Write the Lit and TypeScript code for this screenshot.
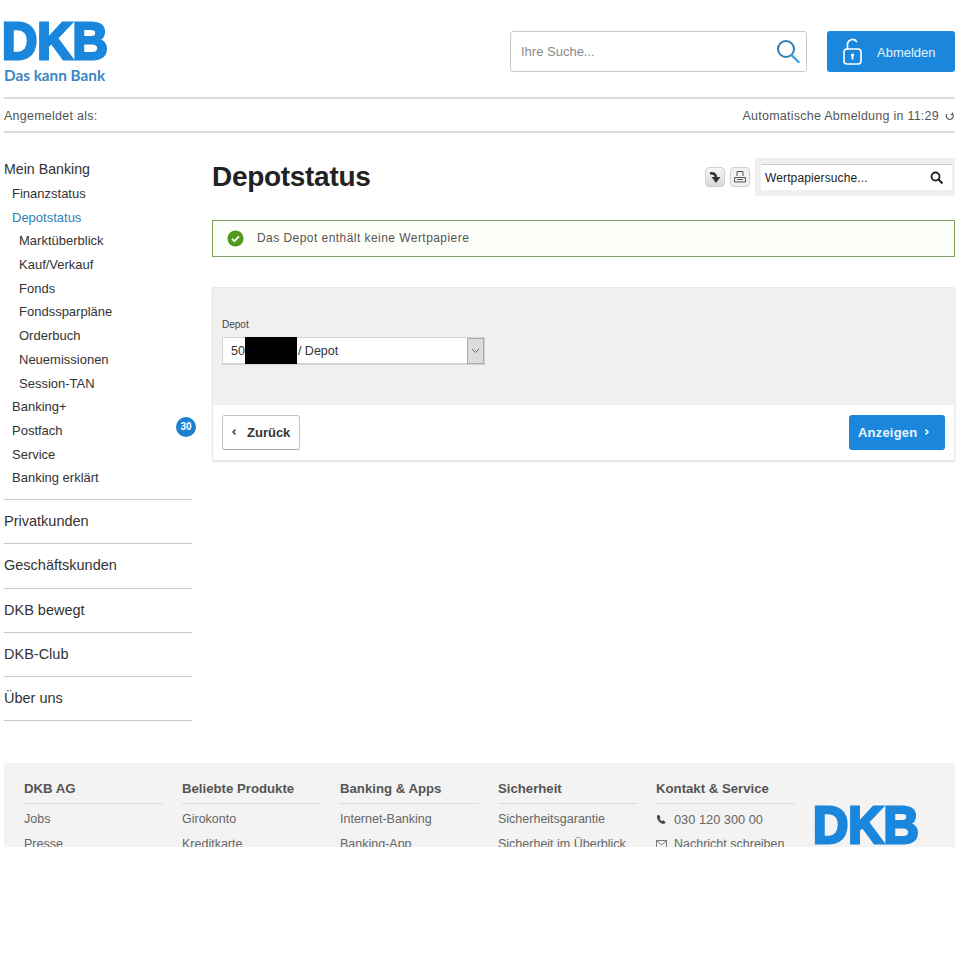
import { LitElement, html, css } from "lit";
import { customElement } from "lit/decorators.js";

const sub = ["Marktüberblick", "Kauf/Verkauf", "Fonds", "Fondssparpläne", "Orderbuch", "Neuemissionen", "Session-TAN"];
const after = ["Banking+", "Postfach", "Service", "Banking erklärt"];
const top = ["Privatkunden", "Geschäftskunden", "DKB bewegt", "DKB-Club", "Über uns"];
const foot = [
  ["DKB AG", "Jobs", "Presse"],
  ["Beliebte Produkte", "Girokonto", "Kreditkarte"],
  ["Banking & Apps", "Internet-Banking", "Banking-App"],
  ["Sicherheit", "Sicherheitsgarantie", "Sicherheit im Überblick"],
];

@customElement("app-root")
export class AppRoot extends LitElement {
  static styles = css`
    :host { display: block; height: 960px; background: #fff; font-family: "Liberation Sans", Arial, sans-serif; color: #333; overflow: hidden; }
    .page { padding: 0 5px 0 4px; }
    .header { height: 97px; display: flex; justify-content: space-between; box-sizing: border-box; padding-top: 21px; }
    .logo-box { width: 104px; }
    .dkb { display: block; width: 119px; height: 41px; margin-left: -2px; font-size: 52px; line-height: 41px; font-weight: 700; color: #1a87dd; -webkit-text-stroke: 3px #1a87dd; transform: scaleX(.94); transform-origin: 0 0; white-space: nowrap; }
    .tag { margin-top: 5px; font: 700 15.3px/17px Lato, sans-serif; color: #3b85c4; white-space: nowrap; }
    .hright { display: flex; gap: 20px; padding-top: 10px; align-items: flex-start; }
    .search { width: 297px; height: 41px; box-sizing: border-box; border: 1px solid #c9c9c9; border-radius: 3px; display: flex; align-items: center; justify-content: space-between; padding: 0 6px 0 10px; font-size: 13px; color: #8a8a8a; }
    .logout { width: 128px; height: 41px; box-sizing: border-box; background: #1a87dd; border-radius: 3px; color: #e4f2fc; display: flex; align-items: center; gap: 13px; padding-left: 15px; font-size: 13px; }
    .logout span { padding-top: 2px; }
    .status { height: 32px; border-top: 2px solid #dcdcdc; border-bottom: 2px solid #dcdcdc; display: flex; align-items: center; justify-content: space-between; font-size: 12.5px; color: #555; letter-spacing: .25px; }
    .status > span { padding-top: 1px; }
    .status .right { display: flex; align-items: center; gap: 6px; }
    .layout { display: flex; gap: 20px; padding-top: 25px; height: 630px; box-sizing: border-box; }
    .nav { width: 188px; flex: none; }
    .nav a { display: block; white-space: nowrap; }
    .l0 { font-size: 14.2px; line-height: 22px; margin-bottom: 2px; color: #333; }
    .l1, .l2 { font-size: 13px; line-height: 23.7px; color: #333; height: 23.7px; }
    .l1 { padding-left: 8px; display: flex !important; justify-content: space-between; align-items: center; }
    .l2 { padding-left: 15px; }
    .nav .active { color: #2f7fb5; }
    .badge { width: 20px; height: 20px; border-radius: 50%; background: #1a7fd0; color: #fff; font-size: 10px; font-weight: 700; display: flex; align-items: center; justify-content: center; margin: 0 -4px 7px 0; }
    .first { padding-bottom: 9.300px; border-bottom: 1px solid #c8c8c8; }
    .top { height: 43.200px; line-height: 43px; border-bottom: 1px solid #c8c8c8; font-size: 14.5px; color: #333; }
    .main { flex: 1; min-width: 0; }
    .titlebar { display: flex; justify-content: space-between; align-items: center; height: 38px; }
    h1 { margin: 0; font-size: 28px; letter-spacing: -.3px; line-height: 38px; font-weight: 700; color: #222; }
    .tools { display: flex; align-items: center; gap: 5px; }
    .tbtn { width: 20px; height: 20px; box-sizing: border-box; border: 1px solid #cfcfcf; border-radius: 4px; background: linear-gradient(#f6f6f6, #d9d9d9); display: flex; align-items: center; justify-content: center; }
    .tbtn.light { background: #f2f2f2; }
    .wsearch { width: 200px; height: 38px; box-sizing: border-box; background: #f0f0f0; padding: 6px 3px 6px 6px; }
    .wsearch div { height: 26px; box-sizing: border-box; background: #fff; border-top: 1px solid #ccc; display: flex; align-items: center; justify-content: space-between; padding: 0 8px 0 4px; font-size: 12px; letter-spacing: .12px; color: #222; }
    .alert { margin-top: 24px; height: 37px; box-sizing: border-box; border: 1px solid #7f9f63; background: #fdfef9; display: flex; align-items: center; gap: 13px; padding: 0 0 1px 14px; font-size: 12px; color: #555; letter-spacing: .45px; }
    .panel { margin-top: 30px; border: 1px solid #e8e8e8; border-radius: 2px; box-shadow: 0 1px 2px rgba(0,0,0,.12); height: 174px; box-sizing: border-box; }
    .gray { background: #f0f0f0; height: 117px; box-sizing: border-box; padding: 30px 9px 0; }
    .label { font-size: 10px; line-height: 13px; color: #444; }
    .select { margin-top: 6px; width: 263px; height: 28px; box-sizing: border-box; background: #fff; border: 1px solid #d4d4d4; border-bottom-width: 2px; display: flex; align-items: center; font-size: 12.5px; color: #333; padding-left: 8px; }
    .mask { width: 52px; height: 27px; background: #000; display: inline-block; margin-right: 1px; }
    .arrow { margin-left: auto; width: 17px; height: 26px; background: #dcdcdc; border: 1px solid #aaa; box-sizing: border-box; display: flex; align-items: center; justify-content: center; }
    .actions { display: flex; justify-content: space-between; padding: 10px 9px 0; }
    .back { width: 78px; height: 35px; box-sizing: border-box; border: 1px solid #c4c4c4; border-bottom-color: #aaa; border-radius: 3px; background: #fff; display: flex; align-items: center; gap: 10px; padding: 0 0 1px 8px; font-size: 13px; font-weight: 700; color: #333; }
    .go { width: 96px; height: 35px; box-sizing: border-box; background: #1a87dd; border-radius: 3px; color: #eaf5fd; display: flex; align-items: center; gap: 7px; padding: 0 0 1px 9px; font-size: 13px; font-weight: 700; letter-spacing: .2px; }
    .footer { height: 84px; background: #f3f3f3; overflow: hidden; display: flex; padding-left: 20px; }
    .cols { display: grid; grid-template-columns: repeat(5, 139px); column-gap: 19px; }
    .fh { height: 41px; margin-bottom: 3px; box-sizing: border-box; border-bottom: 1px solid #dcdcdc; line-height: 51px; font-size: 13.2px; font-weight: 700; color: #555; white-space: nowrap; }
    .fi { height: 25px; font-size: 12.5px; color: #666; white-space: nowrap; display: flex; align-items: center; gap: 7px; }
    .fi span { line-height: 25px; }
    .phone { font-size: 12.8px; }
    .flogo { padding: 42px 0 0 20px; }
  `;

  private dkb() {
    return html`<span class="dkb">DKB</span>`;
  }

  render() {
    return html`
      <div class="page">
        <div class="header">
          <div class="logo-box">${this.dkb()}<div class="tag">Das kann Bank</div></div>
          <div class="hright">
            <div class="search">
              <span>Ihre Suche...</span>
              <svg width="24" height="26" viewBox="0 0 24 26" fill="none" stroke-linecap="round">
                <circle cx="10" cy="10" r="8" stroke="#2f7fb5" stroke-width="2"/>
                <path d="M15.5 16l7 7" stroke="#3ea0e0" stroke-width="2.4"/>
              </svg>
            </div>
            <div class="logout">
              <svg width="22" height="28" viewBox="0 0 22 28" fill="none" stroke="#fff" stroke-width="1.6">
                <rect x="2" y="11" width="17" height="15" rx="3"/>
                <path d="M5.5 11V6a5 5 0 0 1 9-2.500" stroke-linecap="round"/>
                <circle cx="10.500" cy="17" r="1.600" fill="#fff" stroke="none"/>
                <path d="M10.500 18v3.500" stroke-width="1.800"/>
              </svg>
              <span>Abmelden</span>
            </div>
          </div>
        </div>
        <div class="status">
          <span>Angemeldet als:</span>
          <span class="right">Automatische Abmeldung in 11:29
            <svg width="10" height="10" viewBox="0 0 10 10" fill="none" stroke="#555" stroke-width="1.1"><path d="M2 3a3.400 3.400 0 1 0 5.600 0M7.400 1.500v2h-1.800"/></svg>
          </span>
        </div>
        <div class="layout">
          <nav class="nav">
            <div class="first">
              <a class="l0">Mein Banking</a>
              <a class="l1">Finanzstatus</a>
              <a class="l1 active">Depotstatus</a>
              ${sub.map((s) => html`<a class="l2">${s}</a>`)}
              ${after.map((s) => html`<a class="l1"><span>${s}</span>${s === "Postfach" ? html`<span class="badge">30</span>` : ""}</a>`)}
            </div>
            ${top.map((s) => html`<a class="top">${s}</a>`)}
          </nav>
          <main class="main">
            <div class="titlebar">
              <h1>Depotstatus</h1>
              <div class="tools">
                <div class="tbtn">
                  <svg width="14" height="15" viewBox="0 0 14 15" fill="none"><path d="M2 3.500c3-.8 5.500.3 6 3.500" stroke="#333" stroke-width="2.600"/><path d="M3.500 7h9L8 13z" fill="#333"/></svg>
                </div>
                <div class="tbtn light">
                  <svg width="14" height="14" viewBox="0 0 14 14" fill="none" stroke="#555" stroke-width="1"><path d="M4 6V1.500h6V6M1.500 7.500h11v4.500h-11zM4 9.500h6"/></svg>
                </div>
                <div class="wsearch">
                  <div>
                    <span>Wertpapiersuche...</span>
                    <svg width="14" height="14" viewBox="0 0 14 14" fill="none" stroke="#222"><circle cx="5.500" cy="5.500" r="4" stroke-width="1.800"/><path d="M8.500 8.500l4 4" stroke-width="2.200"/></svg>
                  </div>
                </div>
              </div>
            </div>
            <div class="alert">
              <svg width="17" height="17" viewBox="0 0 17 17"><circle cx="8.500" cy="8.500" r="8" fill="#4f9a1c"/><path d="M5 8.800l2.400 2.400L12 6.400" fill="none" stroke="#fff" stroke-width="1.800"/></svg>
              <span>Das Depot enthält keine Wertpapiere</span>
            </div>
            <div class="panel">
              <div class="gray">
                <div class="label">Depot</div>
                <div class="select">
                  <span>50</span><span class="mask"></span><span>/ Depot</span>
                  <span class="arrow"><svg width="9" height="6" viewBox="0 0 9 6" fill="none" stroke="#666"><path d="M1 1l3.500 3.500L8 1"/></svg></span>
                </div>
              </div>
              <div class="actions">
                <div class="back">
                  <svg width="6" height="8" viewBox="0 0 6 8" fill="none" stroke="#444" stroke-width="1.500"><path d="M4.500 1.500L2 4l2.500 2.500"/></svg>
                  <span>Zurück</span>
                </div>
                <div class="go">
                  <span>Anzeigen</span>
                  <svg width="6" height="8" viewBox="0 0 6 8" fill="none" stroke="#fff" stroke-width="1.500"><path d="M1.500 1.500L4 4 1.500 6.500"/></svg>
                </div>
              </div>
            </div>
          </main>
        </div>
        <footer class="footer">
          <div class="cols">
            ${foot.map((c) => html`<div>
              <div class="fh">${c[0]}</div>
              <div class="fi"><span>${c[1]}</span></div>
              <div class="fi"><span>${c[2]}</span></div>
            </div>`)}
            <div>
              <div class="fh">Kontakt &amp; Service</div>
              <div class="fi phone">
                <svg width="11" height="11" viewBox="0 0 11 11"><path d="M1 1.800L3 .8l1.500 2.600-1 1c.5 1.200 1.400 2.200 2.700 2.800l1-1 2.300 1.800-1 1.800C4.500 10.500.5 6 1 1.800z" fill="#444"/></svg>
                <span>030 120 300 00</span>
              </div>
              <div class="fi">
                <svg width="11" height="9" viewBox="0 0 11 9" fill="none" stroke="#777"><path d="M.5.5h10v8H.5zM.5.5l5 4.500 5-4.500"/></svg>
                <span>Nachricht schreiben</span>
              </div>
            </div>
          </div>
          <div class="flogo">${this.dkb()}</div>
        </footer>
      </div>
    `;
  }
}
